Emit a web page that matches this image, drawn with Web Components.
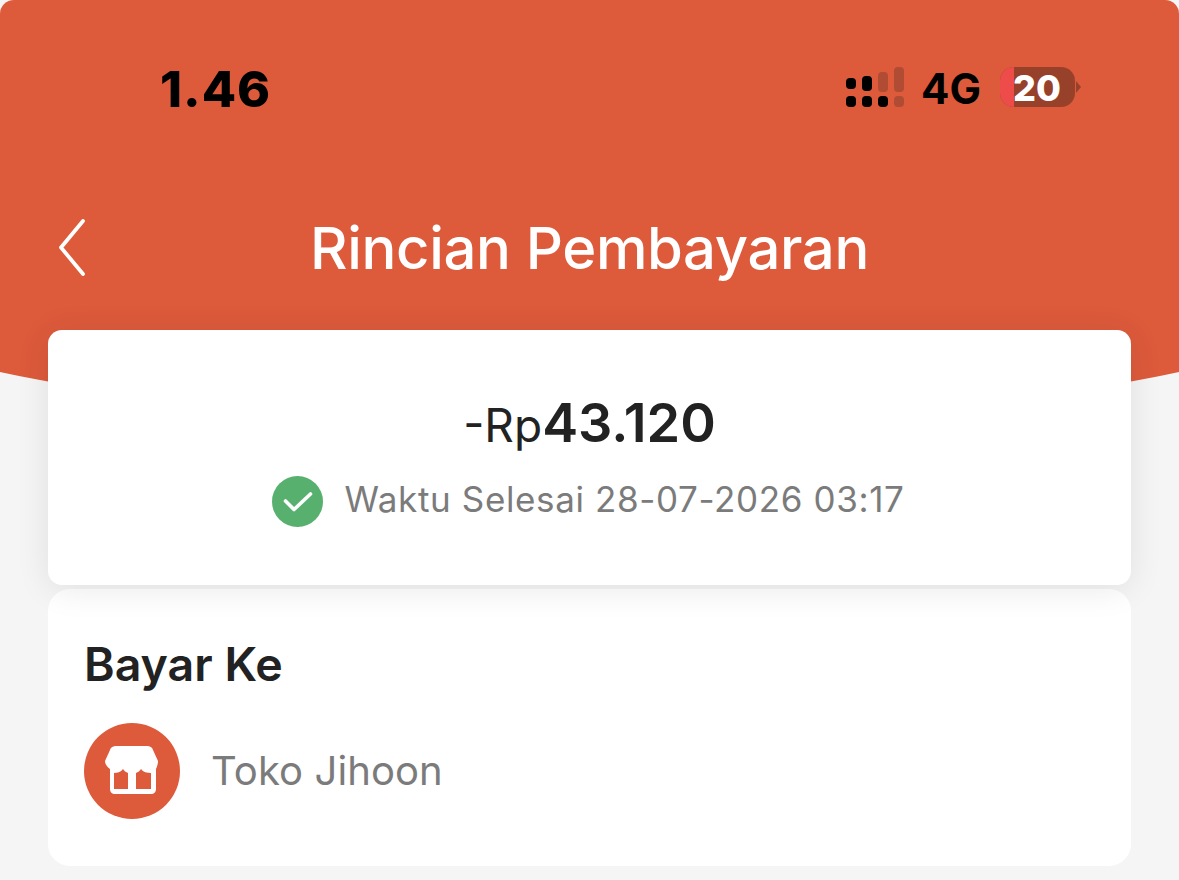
<!DOCTYPE html>
<html lang="id">
<head>
<meta charset="utf-8">
<title>Rincian Pembayaran</title>
<style>
html, body { margin: 0; background: #f5f5f5; }
body { font-family: Inter, "Noto Sans", "Liberation Sans", sans-serif; color: #222; }
</style>
</head>
<body>
<payment-page>
    <status-bar slot="status" time="1.46" network="4G" battery="20"></status-bar>
    <span slot="title">Rincian Pembayaran</span>
    <amount-card prefix="-Rp" amount="43.120">Waktu Selesai 28-07-2026 03:17</amount-card>
    <merchant-card heading="Bayar Ke">Toko Jihoon</merchant-card>
</payment-page>

<script>
"use strict";

class BaseComponent extends HTMLElement {
    constructor() {
        super();
        this.attachShadow({mode: "open"});
    }

    connectedCallback() {
        this.shadowRoot.innerHTML = `<style>${this.css}</style>${this.html}`;
    }
}

class PaymentPage extends BaseComponent {
    get css() {
        return `
            :host { display: block; width: 1179px; height: 880px; overflow: hidden; background: #f5f5f5; }
            .top {
                height: 430px;
                box-sizing: border-box;
                background: #dd5a3b;
                clip-path: ellipse(2830px 2830px at 50% -2396px);
                border-radius: 14px 14px 0 0;
            }
            .nav { display: flex; align-items: center; height: 80px; padding-left: 58px; margin-top: 31px; }
            .title { flex: 1; text-align: center; margin-right: 86px; color: #fff; font-size: 58px; font-weight: 500; letter-spacing: -0.35px; }
            svg { display: block; flex: none; }
            .cards { display: flex; flex-direction: column; gap: 4px; padding: 0 48px; margin-top: -100px; }
        `;
    }

    get html() {
        return `
            <div class="top">
                <slot name="status"></slot>
                <div class="nav">
                    <svg width="28" height="58" viewBox="0 0 28 58"><path d="M25 2 L3 28.500 L25 55" fill="none" stroke="#fff" stroke-width="3.800" stroke-linecap="round" stroke-linejoin="round"/></svg>
                    <div class="title"><slot name="title"></slot></div>
                </div>
            </div>
            <div class="cards"><slot></slot></div>
        `;
    }
}

class StatusBar extends BaseComponent {
    get css() {
        return `
            :host { display: flex; align-items: center; height: 177px; box-sizing: border-box; padding: 0 98px 0 160px; color: #000; }
            .time { flex: 1; font-size: 50px; font-weight: 800; letter-spacing: 1px; }
            .net { font-size: 42px; font-weight: 700; margin: 0 19px 0 17px; }
            .battery { display: flex; align-items: center; margin-bottom: 4px; }
            .cell { display: flex; width: 75px; height: 40px; border-radius: 14px; background: #97412b; }
            .low { width: 14px; background: #ee4b4b; border-radius: 14px 0 0 14px; }
            .level { color: #fff; font-size: 36px; font-weight: 800; line-height: 42px; margin-left: -1px; }
            .nub { width: 0; height: 0; margin-left: 1px; border-left: 5px solid #97412b; border-top: 6px solid transparent; border-bottom: 6px solid transparent; }
            svg { display: block; margin-bottom: 4px; }
        `;
    }

    get html() {
        return `
            <div class="time">${this.getAttribute("time")}</div>
            <svg width="58" height="40" viewBox="0 0 58 40">
                <g fill="#000">
                    <rect x="0" y="11" width="10" height="11" rx="4"/>
                    <rect x="0" y="29" width="10" height="11" rx="4"/>
                    <rect x="16" y="9" width="10" height="15" rx="4"/>
                    <rect x="16" y="29" width="10" height="11" rx="4"/>
                    <rect x="32" y="29" width="10" height="11" rx="4"/>
                </g>
                <g fill="#b04c33">
                    <rect x="32" y="5" width="10" height="20" rx="4"/>
                    <rect x="48" y="0" width="10" height="25" rx="4"/>
                    <rect x="48" y="29" width="10" height="11" rx="4"/>
                </g>
            </svg>
            <div class="net">${this.getAttribute("network")}</div>
            <div class="battery">
                <div class="cell"><div class="low"></div><div class="level">${this.getAttribute("battery")}</div></div>
                <div class="nub"></div>
            </div>
        `;
    }
}

class AmountCard extends BaseComponent {
    get css() {
        return `
            :host { display: flex; flex-direction: column; align-items: center; height: 255px; box-sizing: border-box; padding-top: 61px; background: #fff; border-radius: 14px; box-shadow: 0 4px 34px rgba(0, 0, 0, 0.09); position: relative; }
            .amount { font-size: 46px; line-height: 64px; color: #222; }
            .amount b { font-size: 54px; font-weight: 600; }
            .done { display: flex; align-items: flex-start; gap: 21px; margin: 19px 2px 0 0; color: #7b7b7b; font-size: 35px; letter-spacing: 0.63px; }
            .done span { margin-top: 2px; }
            svg { display: block; }
        `;
    }

    get html() {
        return `
            <div class="amount">${this.getAttribute("prefix")}<b>${this.getAttribute("amount")}</b></div>
            <div class="done">
                <svg width="51" height="51" viewBox="0 0 51 51"><circle cx="25.500" cy="25.500" r="25.500" fill="#58b06f"/><path d="M13.500 25 L22 33.500 L38.500 18" fill="none" stroke="#fff" stroke-width="3.600" stroke-linecap="round" stroke-linejoin="round"/></svg>
                <span><slot></slot></span>
            </div>
        `;
    }
}

class MerchantCard extends BaseComponent {
    get css() {
        return `
            :host { display: block; height: 277px; box-sizing: border-box; padding: 45px 36px 0; background: #fff; border-radius: 22px; }
            h2 { margin: 0; font-size: 46.500px; line-height: 60px; font-weight: 600; color: #222; }
            .row { display: flex; align-items: center; gap: 31px; margin-top: 29px; color: #7b7b7b; font-size: 40px; letter-spacing: 0.1px; }
            .row span { margin-bottom: 2px; }
            svg { display: block; }
        `;
    }

    get html() {
        return `
            <h2>${this.getAttribute("heading")}</h2>
            <div class="row">
                <svg width="96" height="96" viewBox="0 0 96 96">
                    <circle cx="48" cy="48" r="48" fill="#dd5a3b"/>
                    <path fill="#fff" d="M33 23 H63 C66 23 68 24 69 27 L74 38 C74 41 73 44 72 46 V66 C72 69 70 71 67 71 H31 C28 71 26 69 26 66 V46 C23 44 21 41 21 38 L26 27 C27 24 29 23 33 23 Z"/>
                    <path fill="#dd5a3b" d="M30 50 C33 50 37 49 39 46 C40 48 42 49 44 50 V66 H30 Z M52 50 C54 49 56 48 57 46 C59 49 63 50 67 50 V66 H52 Z"/>
                </svg>
                <span><slot></slot></span>
            </div>
        `;
    }
}

customElements.define("payment-page", PaymentPage);
customElements.define("status-bar", StatusBar);
customElements.define("amount-card", AmountCard);
customElements.define("merchant-card", MerchantCard);
</script>
</body>
</html>
